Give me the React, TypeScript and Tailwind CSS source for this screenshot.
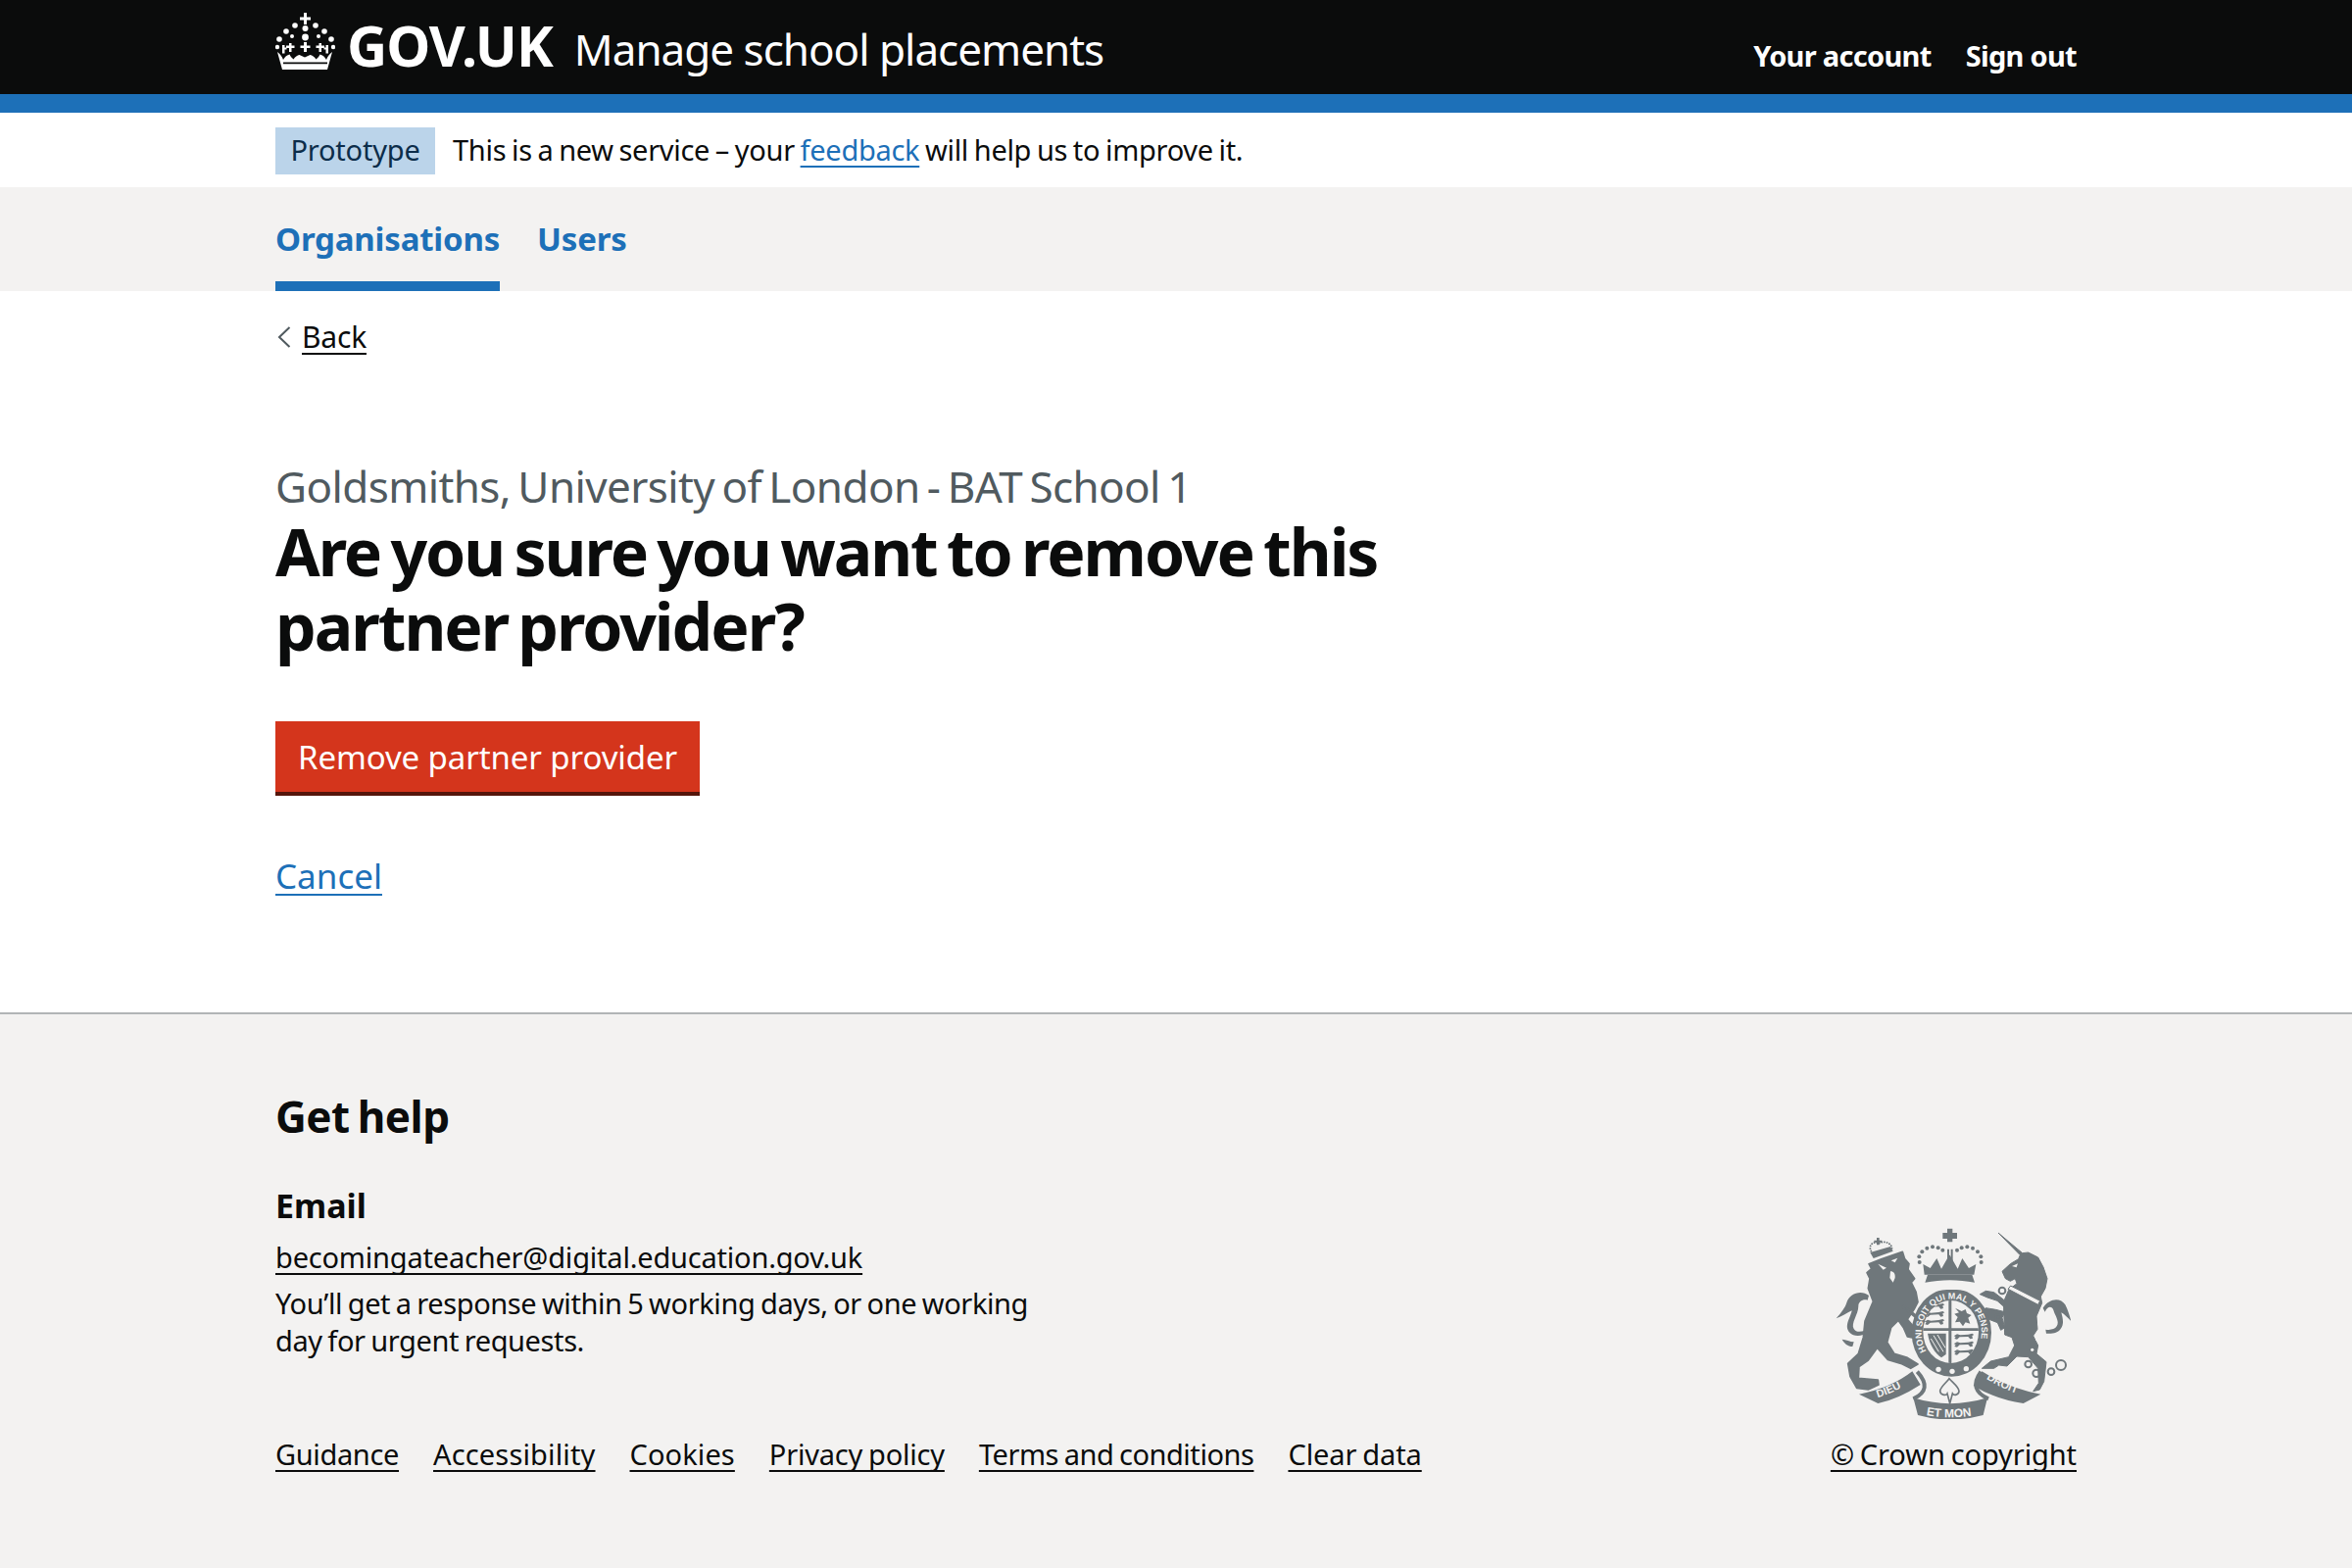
import React from "react";

const font = "font-['Noto_Sans',sans-serif]";
const u = "underline decoration-[2px] underline-offset-[5px] [text-decoration-skip-ink:none]";
const tight = "tracking-[-0.3px] [word-spacing:-1.5px]";

function Crown() {
  return (
    <svg width="61" height="58" viewBox="0 0 61 58" fill="#fff" className="shrink-0">
      <path d="M29 0h3v4.500h4v3h-4V12h-3V7.500h-4v-3h4z" />
      {[[30.5,16,3],[20,13,2.8],[41,13,2.8],[11,19,2.8],[50,19,2.8],[4,27,2.8],[57,27,2.8],[30.5,25,3.4],[17,24,2],[44,24,2],[2,35,2.2],[59,35,2.2]].map(([x,y,r],i)=>(<circle key={i} cx={x} cy={y} r={r}/>))}
      <path d="M29 30h3v3.500h3.500v2.500h-3.500v4h-3v-4h-3.500v-2.500h3.500z" />
      <path d="M14 31h2.500v2.500h3v2.500h-3v4h-2.500v-4h-3v-2.500h3zM44.500 31h2.500v2.500h3v2.500h-3v4h-2.500v-4h-3v-2.500h3z" />
      <path d="M7 33h2.500v2.500h2v2h-2v4h-2.500zM51.500 33h2.500v8.500h-2.500v-4h-2v-2h2z" />
      <path d="M2 40c3 2 5 5 6 8 1.500-3 4-5 6.500-5.500 1 2 2 3.500 4 5 1.500-2.500 4-4 6-4.500l5.500 2.500 5.500-2.500c2 .5 4.500 2 6 4.500 2-1.500 3-3 4-5 2.500.5 5 2.500 6.500 5.500 1-3 3-6 6-8l-5 18H7z" />
      <path d="M8 50.500h45v1.800H8z" fill="#0b0c0c" />
    </svg>
  );
}

function Crest() {
  const c = "#6f777b";
  const bg = "#f3f2f1";
  const lions = (x: number, y: number) => (
    <g fill={c}>
      {[0, 24, 48].map((d) => (
        <path key={d} d={`M${x} ${y + d + 8}l10-6 10 3 24-2 12-3 6 4-6 3 2 8-8 2-6-7-26 1-8 7-8-2 4-6z`} />
      ))}
    </g>
  );
  return (
    <svg width="240" height="195" viewBox="340 95 720 585" className="block">
      <defs>
        <path id="garter" d="M620 475A92 103 0 1 1 770 475" />
        <path id="dieu" d="M440 622Q520 604 585 556" />
        <path id="droit" d="M795 552Q855 595 945 616" />
        <path id="etmon" d="M592 662Q690 688 795 662" />
        <clipPath id="shield"><ellipse cx="693" cy="413" rx="85" ry="96" /></clipPath>
      </defs>
      {/* lion */}
      <g fill={c} stroke={c} strokeWidth="5" strokeLinejoin="round">
        <path d="M442 205L480 190 545 168 552 190 565 205 562 222 582 250 572 262 586 290 592 322 580 345 560 375 590 410 582 432 560 428 548 400 532 378 510 400 498 445 520 480 560 492 592 512 570 525 540 510 500 498 468 462 440 500 412 520 410 555 470 560 472 575 440 590 405 585 385 550 378 510 410 480 425 430 430 380 455 320 440 280 445 250 436 232 450 220Z" />
        <path d="M548 332l52 42-4 4-52-42z" />
      </g>
      <g fill={c}>
        <path d="M442 302c-22-18-60-8-68 22-4 14-16 30-32 48 18-6 32-16 48-24-4 22-26 48-6 68 8 8 24 12 40 6l4-12c-14 4-26 4-32-6-10-18 14-44 14-70 0-14 14-22 28-18z" />
        <path d="M360 436c12 0 24 8 36 8l-4 14c-14 0-26-10-32-22z" />
        <path d="M446 170l62-18 8 14-60 22z" />
        <path d="M466 125h8v8h8v6h-8v8h-8v-8h-8v-6h8z" />
      </g>
      <path d="M450 168c-14-24 12-34 24-26 14-10 42 0 38 20" fill="none" stroke={c} strokeWidth="5" strokeDasharray="5 3" />
      <g fill={bg}>
        <path d="M470 205l26 12-10 6zM510 195l20-8-8 14zM508 228c10 0 16 8 14 20l-6 14-10-14z" />
      </g>
      {/* unicorn */}
      <g fill={c} stroke={c} strokeWidth="3" strokeLinejoin="round">
        <path d="M838 110L912 172 930 170 960 185 976 215 988 250 982 280 968 305 972 325 955 365 958 405 945 425 960 455 955 480 985 505 978 565 965 590 945 595 962 570 960 525 930 490 895 488 865 518 840 515 825 525 788 525 815 503 870 490 888 455 880 430 858 422 855 350 855 320 870 285 895 265 890 250 875 258 860 250 850 228 875 205 900 190 905 178Z" />
        <path d="M860 340L835 318 805 308 782 298 800 288 825 292 855 315Z" />
        <path d="M858 352L830 345 800 340 790 350 810 375 836 385 846 408 858 400 850 370Z" />
      </g>
      <path d="M975 340c18-30 54-34 68-10 4 8 10 20 18 50-10-8-20-22-30-26 4 16 10 34-2 50-8 12-26 16-44 14l-2-12c14 2 28 0 34-10 10-16-6-34-10-50-4-12-18-14-26 6z" fill={c} />
      <path d="M876 272l90 46-6 12-92-48z" fill={bg} stroke={c} strokeWidth="3" />
      <g fill={bg}>
        <circle cx="968" cy="388" r="9" /><circle cx="960" cy="434" r="8" /><circle cx="942" cy="468" r="5" /><circle cx="968" cy="470" r="4" />
        <path d="M880 212l18-8-4 12z" />
      </g>
      {/* royal crown */}
      <g fill={c}>
        <path d="M612 238l-4-32 22 12 20-30 14 32 24-42 2 0 24 42 14-32 20 30 22-12-6 32z" />
        <path d="M622 238h136l8 24c-50-10-102-10-152 0z" />
        <path d="M682 97h16v13h14v18h-14v10h-16v-10h-14v-18h14z" />
        <path d="M682 160h6v38h-6zM693 160h6v38h-6z" />
        {[[597,200],[596,183],[605,168],[620,157],[637,153],[654,156],[668,163],[712,163],[726,156],[743,153],[760,157],[775,168],[785,183],[786,200]].map(([x,y],i)=>(<circle key={i} cx={x} cy={y} r="6"/>))}
        <ellipse cx="695" cy="415" rx="122" ry="135" />
      </g>
      <path d="M618 266c50-10 102-10 152 0l-12 24c-40-8-84-8-124 0z" fill={bg} />
      {/* shield */}
      <ellipse cx="693" cy="413" rx="85" ry="96" fill={bg} />
      <g clipPath="url(#shield)">
        {lions(612, 326)}
        {lions(702, 418)}
        <g fill={c}>
          <path d="M686 310h9v202h-9zM600 402h190v8H600z" />
          <path d="M706 340l20 10 12-6 4 12 14 6-10 8 6 18-14-4-8 12-10-14-14 2 8-16-10-10 14-4z" />
          <path d="M622 418h56v64l-14 10c-20-14-36-38-42-74z" />
        </g>
        <g fill="none" stroke={bg} strokeWidth="3"><path d="M640 424l30 50M652 422l24 40M632 434l24 40" /></g>
      </g>
      <text fontSize="27" fill={bg} fontFamily="'Liberation Sans',sans-serif" fontWeight="700"><textPath href="#garter" startOffset="4">HONI SOIT QUI MAL Y PENSE</textPath></text>
      <g fill={bg}>
        {[[655,528],[697,534],[740,526]].map(([x,y],i)=>(<circle key={i} cx={x} cy={y} r="8"/>))}
      </g>
      {/* motto */}
      <g fill={c}>
        <path d="M412 604Q510 585 575 534L600 575Q530 620 470 632Z" />
        <path d="M968 604Q870 585 788 534L762 578Q830 620 915 632Z" />
        <path d="M578 615Q690 650 805 615L792 668Q690 695 592 668Z" />
      </g>
      <g fill="none" stroke={c} strokeWidth="12">
        <path d="M590 535Q640 590 578 618" />
        <path d="M785 535Q745 590 808 618" />
      </g>
      <path d="M688 556c10 12 28 24 30 38 0 14-16 14-20 8l-8 30-8-30c-4 8-22 4-22-8 2-14 20-26 28-38z" fill={bg} stroke={c} strokeWidth="5" />
      <g fill={bg} fontFamily="'Liberation Sans',sans-serif" fontWeight="700" fontSize="33">
        <text><textPath href="#dieu" startOffset="30">DIEU</textPath></text>
        <text><textPath href="#droit" startOffset="8">DROIT</textPath></text>
        <text fontSize="36"><textPath href="#etmon" startOffset="26">ET MON</textPath></text>
      </g>
      <g fill="none" stroke={c} strokeWidth="6">
        <circle cx="930" cy="512" r="10" /><circle cx="955" cy="540" r="11" /><circle cx="1000" cy="535" r="10" /><circle cx="1030" cy="515" r="15" />
        <circle cx="850" cy="287" r="10" /><circle cx="838" cy="368" r="9" />
      </g>
    </svg>
  );
}

const links = [
  { t: "Guidance", k: "tracking-[-0.35px]" },
  { t: "Accessibility", k: "tracking-[0.15px]" },
  { t: "Cookies", k: "tracking-[0.1px]" },
  { t: "Privacy policy", k: "tracking-[-0.2px]" },
  { t: "Terms and conditions", k: "tracking-[-0.45px]" },
  { t: "Clear data", k: "tracking-[-0.1px]" },
];

export default function App() {
  return (
    <div className={`${font} flex h-[1600px] w-full flex-col bg-white text-[#0b0c0c]`}>
      <header className="h-[115px] shrink-0 border-b-[19px] border-[#1d70b8] bg-[#0b0c0c] text-white">
        <div className="mx-[281px] flex h-[96px] items-start justify-between">
          <div className="flex items-start">
            <div className="mt-[13px]"><Crown /></div>
            <span className="ml-[12px] mt-[17px] text-[57px] font-bold leading-[58px] tracking-[-1px]">GOV.UK</span>
            <span className="ml-[22px] mt-[21px] text-[44px] leading-[58px] tracking-[-1px]">Manage school placements</span>
          </div>
          <nav className="flex gap-[35px] pt-[38px] text-[29px] font-bold leading-[38px] tracking-[-0.7px]">
            <a>Your account</a>
            <a>Sign out</a>
          </nav>
        </div>
      </header>

      <div className="flex h-[76px] shrink-0 items-start gap-[18px] px-[281px] pt-[15px]">
        <span className="flex h-[48px] w-[163px] items-center justify-center bg-[#bbd4ea] pb-[2px] text-[29px] tracking-[-0.2px] text-[#0c2d4a]">Prototype</span>
        <p className={`text-[29px] leading-[46px] ${tight}`}>
          This is a new service – your <a className={`${u} text-[#1d70b8]`}>feedback</a> will help us to improve it.
        </p>
      </div>

      <nav className="flex h-[106px] shrink-0 items-start gap-[38px] bg-[#f3f2f1] px-[281px] text-[33px] font-bold tracking-[-0.2px] text-[#1d70b8]">
        <a className="flex h-[106px] items-start border-b-[10px] border-[#1d70b8] pt-[30px] leading-[46px]">Organisations</a>
        <a className="pt-[30px] leading-[46px]">Users</a>
      </nav>

      <main className="flex-1 px-[281px]">
        <a className="mt-[28px] flex w-fit items-center text-[30px] leading-[38px] tracking-[-0.2px]">
          <svg width="14" height="22" viewBox="0 0 14 22" fill="none" stroke="#505a5f" strokeWidth="2" className="mr-[11px] ml-[2px]"><path d="M12.500 1 2 11l10.500 10" /></svg>
          <span className={u}>Back</span>
        </a>
        <p className="mt-[105px] text-[44px] leading-[56px] tracking-[-0.6px] text-[#505a5f] [word-spacing:-3.5px]">Goldsmiths, University of London - BAT School 1</p>
        <h1 className="w-[1200px] text-[66px] font-bold leading-[76px] tracking-[-2px] [word-spacing:-5px]">Are you sure you want to remove this partner provider?</h1>
        <button className="mt-[60px] block h-[76px] w-[433px] border-b-[4px] border-[#55150b] bg-[#d4351c] pt-[2px] text-[33px] tracking-[-0.1px] text-white">Remove partner provider</button>
        <a className={`mt-[58px] block w-fit text-[35px] leading-[48px] text-[#1d70b8] ${u}`}>Cancel</a>
      </main>

      <footer className="relative h-[567px] shrink-0 border-t-2 border-[#b1b4b6] bg-[#f3f2f1] px-[281px]">
        <h2 className="pt-[76px] text-[44px] font-bold leading-[56px] tracking-[-0.5px] [word-spacing:-3px]">Get help</h2>
        <h3 className="mt-[39px] text-[34px] font-bold leading-[48px]">Email</h3>
        <a className={`mt-[10px] block w-fit text-[29px] leading-[38px] tracking-[-0.2px] ${u}`}>becomingateacher@digital.education.gov.uk</a>
        <p className={`mt-[9px] w-[780px] text-[29px] leading-[38px] tracking-[-0.4px] [word-spacing:-1.5px]`}>You’ll get a response within 5 working days, or one working day for urgent requests.</p>
        <div className="mt-[78px] flex items-center justify-between text-[29px] leading-[38px] [word-spacing:-1.5px]">
          <div className="flex gap-[35px]">
            {links.map(({ t, k }) => (<a key={t} className={`${u} ${k}`}>{t}</a>))}
          </div>
          <a className={`${u} tracking-[-0.1px]`}>© Crown copyright</a>
        </div>
        <div className="absolute right-[287px] top-[218px]"><Crest /></div>
      </footer>
    </div>
  );
}
